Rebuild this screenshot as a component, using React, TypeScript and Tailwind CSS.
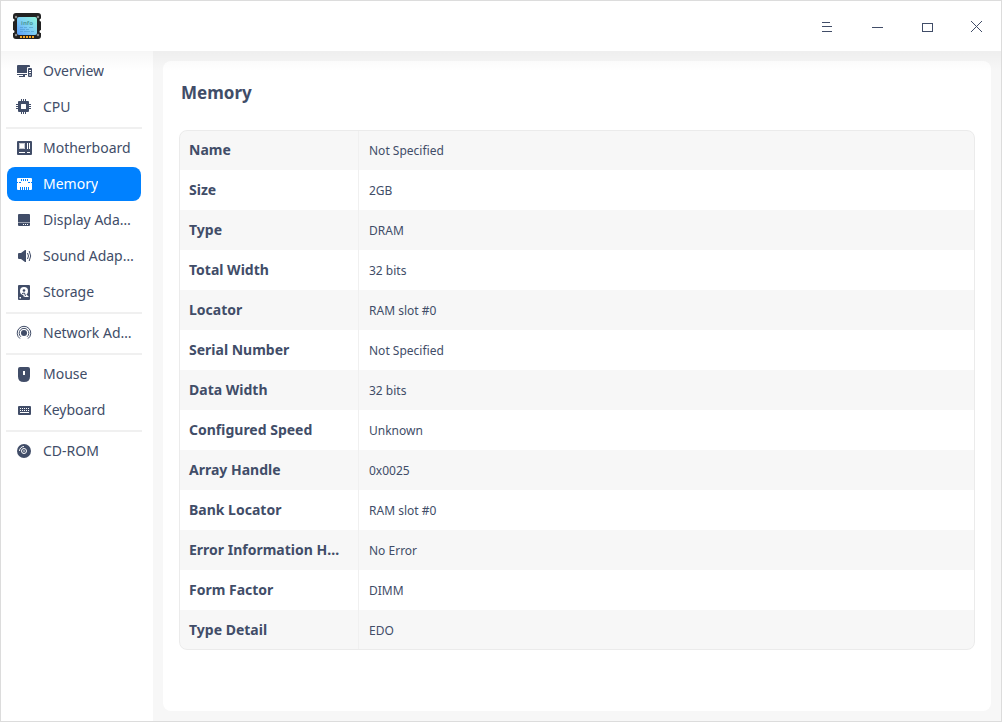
import { Fragment, useState, type ReactNode } from 'react';

type Item = { id: string; label: string; icon: ReactNode };

const Cut = ({ d }: { d: string }) => (
  <path d={d} fill="currentColor" fillRule="evenodd" />
);

const groups: Item[][] = [
  [
    {
      id: 'overview',
      label: 'Overview',
      icon: (
        <>
          <Cut d="M2 2H13a1 1 0 0 1 1 1V4H12a1 1 0 0 0-1 1V10H1V3a1 1 0 0 1 1-1zM1 11H11V12H1zM3 13H9V14H3zM7 12H9V13H7z" />
          <Cut d="M13 5H15a1 1 0 0 1 1 1V13a1 1 0 0 1-1 1H13a1 1 0 0 1-1-1V6a1 1 0 0 1 1-1zM13 7V8H15V7zM13 9V10H15V9zM13 11.500V12.500H15V11.500z" />
        </>
      ),
    },
    {
      id: 'cpu',
      label: 'CPU',
      icon: (
        <Cut d="M3 2H5V0H6V2H7V0H8V2H9V0H10V2H12a1 1 0 0 1 1 1V5H15V6H13V7H15V8H13V9H15V10H13V12a1 1 0 0 1-1 1H10V15H9V13H8V15H7V13H6V15H5V13H3a1 1 0 0 1-1-1V10H0V9H2V8H0V7H2V6H0V5H2V3a1 1 0 0 1 1-1zM5.500 5a.5.5 0 0 0-.5.5V9.500a.5.5 0 0 0 .5.5H9.500a.5.5 0 0 0 .5-.5V5.500a.5.5 0 0 0-.5-.5z" />
      ),
    },
  ],
  [
    {
      id: 'motherboard',
      label: 'Motherboard',
      icon: (
        <>
          <Cut d="M2 1H15a1 1 0 0 1 1 1V14a1 1 0 0 1-1 1H2a1 1 0 0 1-1-1V2a1 1 0 0 1 1-1zM3 3V9H9V3zM11 3V9H12V3zM13 3V9H14V3zM3 12V13H9V12zM11 12V13H14V12z" />
          <path d="M3.500 3.500H8.500V8.500H3.500z" fill="none" stroke="currentColor" strokeOpacity=".3" />
        </>
      ),
    },
    {
      id: 'memory',
      label: 'Memory',
      icon: (
        <Cut d="M2 2H15a1 1 0 0 1 1 1V6H15V7H16V13a1 1 0 0 1-1 1H13V11H12V14H11V11H10V14H9V11H8V14H7V11H6V14H5V11H4V14H2a1 1 0 0 1-1-1V7H2V6H1V3a1 1 0 0 1 1-1zM5 3V5H6V3zM7 3V5H8V3zM9 3V5H10V3zM11 3V5H12V3zM3 6V7H5V6zM12 6V7H14V6z" />
      ),
    },
    {
      id: 'display',
      label: 'Display Adapter',
      icon: (
        <Cut d="M3 2H13a1 1 0 0 1 1 1V10H2V3a1 1 0 0 1 1-1zM2 10.500H14V13a1 1 0 0 1-1 1H3a1 1 0 0 1-1-1zM7 12V13H8V12zM9 12V13H10V12zM11 12V13H12V12z" />
      ),
    },
    {
      id: 'sound',
      label: 'Sound Adapter',
      icon: (
        <>
          <Cut d="M3 5H5L9 2q1-.4 1 .6V13.400q0 1-1 .6L5 11H3a1 1 0 0 1-1-1V6a1 1 0 0 1 1-1z" />
          <path d="M11.500 5q2 3 0 6M13.200 3q3 5 0 10" fill="none" stroke="currentColor" />
        </>
      ),
    },
    {
      id: 'storage',
      label: 'Storage',
      icon: (
        <>
          <rect x="2" y="1" width="12" height="15" rx="1" fill="currentColor" />
          <circle cx="8" cy="7" r="4" fill="#fff" />
          <path d="M7 12L9 9L13 13H9z" fill="#fff" />
          <circle cx="8" cy="6.500" r="1.300" fill="currentColor" />
          <path d="M6 9.500L8.500 9L9.500 12" fill="none" stroke="currentColor" />
          <path d="M3.500 13H5V14.500H3.500z" fill="#fff" />
        </>
      ),
    },
  ],
  [
    {
      id: 'network',
      label: 'Network Adapter',
      icon: (
        <>
          <circle cx="8" cy="8" r="3" fill="currentColor" />
          <path d="M4.900 11.800a4.800 4.800 0 1 1 6.200 0M4 13.600a6.800 6.800 0 1 1 8 0" fill="none" stroke="currentColor" />
        </>
      ),
    },
  ],
  [
    {
      id: 'mouse',
      label: 'Mouse',
      icon: (
        <Cut d="M4 1H12a2 2 0 0 1 2 2V10.500Q14 16 8 16T2 10.500V3a2 2 0 0 1 2-2zM7 5V9H9V5z" />
      ),
    },
    {
      id: 'keyboard',
      label: 'Keyboard',
      icon: (
        <Cut d="M3 4H14a1 1 0 0 1 1 1V12a1 1 0 0 1-1 1H3a1 1 0 0 1-1-1V5a1 1 0 0 1 1-1zM4 6V7H5V6zM6 6V7H7V6zM8 6V7H9V6zM10 6V7H11V6zM12 6V7H13V6zM4 8V9H5V8zM6 8V9H7V8zM8 8V9H9V8zM10 8V9H11V8zM12 8V9H13V8zM4 10V11H13V10z" />
      ),
    },
  ],
  [
    {
      id: 'cdrom',
      label: 'CD-ROM',
      icon: (
        <>
          <circle cx="8" cy="8" r="7" fill="currentColor" />
          <g fill="none" stroke="#fff">
            <circle cx="8" cy="8" r="2.500" />
            <path d="M3.500 8A4.500 4.500 0 0 1 8 3.500" />
          </g>
          <circle cx="8" cy="8" r="0.800" fill="#fff" />
        </>
      ),
    },
  ],
];

const details: [string, string][] = [
  ['Name', 'Not Specified'],
  ['Size', '2GB'],
  ['Type', 'DRAM'],
  ['Total Width', '32 bits'],
  ['Locator', 'RAM slot #0'],
  ['Serial Number', 'Not Specified'],
  ['Data Width', '32 bits'],
  ['Configured Speed', 'Unknown'],
  ['Array Handle', '0x0025'],
  ['Bank Locator', 'RAM slot #0'],
  ['Error Information Handle', 'No Error'],
  ['Form Factor', 'DIMM'],
  ['Type Detail', 'EDO'],
];

const windowButtons = [
  { label: 'Menu', d: 'M3 3H11V4H3zM3 7H13V8H3zM3 12H13V13H3z' },
  { label: 'Minimize', d: 'M3 8H14V9H3z' },
  { label: 'Maximize', d: 'M3 4H14V13H3zM4 5V12H13V5z' },
];

function Logo() {
  return (
    <svg viewBox="0 0 32 32" className="size-8" aria-hidden="true">
      <defs>
        <linearGradient id="chip" x1="1" y1="0" x2="0" y2="1">
          <stop offset="0" stopColor="#8ff5d8" />
          <stop offset="0.500" stopColor="#7fd0f5" />
          <stop offset="1" stopColor="#5a9dfb" />
        </linearGradient>
      </defs>
      <path
        d="M5 3H27a3 3 0 0 1 3 3V8.500a1.500 1.500 0 0 0 0 3V20a1.500 1.500 0 0 0 0 3V26a3 3 0 0 1-3 3H5a3 3 0 0 1-3-3V23a1.500 1.500 0 0 0 0-3V11.500a1.500 1.500 0 0 0 0-3V6a3 3 0 0 1 3-3z"
        fill="#222"
      />
      <g fill="#8b8b8b">
        <circle cx="5" cy="7" r="1.200" />
        <circle cx="27" cy="7" r="1.200" />
        <circle cx="5" cy="25" r="1.200" />
        <circle cx="27" cy="25" r="1.200" />
      </g>
      <rect x="6" y="7" width="20" height="18" rx="2" fill="url(#chip)" />
      <text x="16" y="15" textAnchor="middle" fontSize="6" fontWeight="700" fill="#4c9a9e" fontFamily="Noto Sans, sans-serif">
        info
      </text>
      <path
        d="M9 17.500h3m1 0h3m2 0h4M9 19.500h5m1 0h3M9 21.500h3m1 0h6m1 0h3"
        stroke="#4b94c8"
        strokeOpacity="0.700"
        strokeWidth="0.800"
      />
      <path d="M9 26h2v2H9zM12 26h2v2H12zM15 26h2v2H15zM18 26h2v2H18zM21 26h2v2H21z" fill="#f5a623" />
    </svg>
  );
}

export default function App() {
  const [active, setActive] = useState('memory');

  return (
    <div className="flex min-h-screen flex-col border border-[#dcdcdc] bg-white font-['Noto_Sans',sans-serif] text-[#414d68]">
      <header className="relative flex h-[50px] items-center justify-between bg-white pl-[10px] after:pointer-events-none after:absolute after:inset-x-0 after:top-full after:h-5 after:bg-linear-to-b after:from-black/[0.035] after:to-transparent after:content-['']">
        <Logo />
        <div className="flex h-full">
          {windowButtons.map((b) => (
            <button key={b.label} type="button" aria-label={b.label} className="flex w-[50px] items-center justify-center">
              <svg viewBox="0 0 14 14" className="size-3.5" shapeRendering="crispEdges">
                <Cut d={b.d} />
              </svg>
            </button>
          ))}
          <button type="button" aria-label="Close" className="flex w-[50px] items-center justify-center">
            <svg viewBox="0 0 14 14" className="size-3.5">
              <path d="M2 2L13 13M13 2L2 13" stroke="currentColor" />
            </svg>
          </button>
        </div>
      </header>

      <div className="flex flex-1">
        <nav aria-label="Devices" className="w-[152px] shrink-0 pt-0.5">
          {groups.map((group, i) => (
            <Fragment key={group[0].id}>
              {i > 0 && <hr className="mx-auto mt-0.5 mb-px ml-[5px] h-0.5 w-[136px] border-0 bg-[#f0f0f0]" />}
              <ul className="pr-3 pl-1.5">
                {group.map((item) => (
                  <li key={item.id} className="py-px">
                    <button
                      type="button"
                      onClick={() => setActive(item.id)}
                      aria-current={item.id === active ? 'page' : undefined}
                      className={
                        item.id === active
                          ? 'flex h-[34px] w-full items-center gap-[11px] rounded-lg bg-[#0081ff] pr-1.5 pl-[9px] text-white'
                          : 'flex h-[34px] w-full items-center gap-[11px] rounded-lg pr-1.5 pl-[9px]'
                      }
                    >
                      <svg viewBox="0 0 16 16" className="size-4 shrink-0" aria-hidden="true">
                        {item.icon}
                      </svg>
                      <span className="truncate text-sm">{item.label}</span>
                    </button>
                  </li>
                ))}
              </ul>
            </Fragment>
          ))}
        </nav>

        <main className="flex min-w-0 flex-1 bg-[#f7f7f7] p-[10px]">
          <section className="min-w-0 flex-1 rounded-lg bg-white p-4">
            <h1 className="mb-[21px] pl-0.5 text-[17px] leading-8 font-bold">Memory</h1>
            <div className="relative overflow-hidden rounded-lg after:pointer-events-none after:absolute after:inset-0 after:rounded-lg after:border after:border-[#ebebeb] after:content-['']">
              <table className="w-full table-fixed border-separate border-spacing-0 text-left">
                <tbody>
                  {details.map(([name, value]) => (
                    <tr key={name} className="h-10 odd:bg-[#f7f7f7]">
                      <th scope="row" className="w-[180px] truncate border-r border-[#f0f0f0] pr-4 pl-[10px] text-sm font-bold">
                        {name}
                      </th>
                      <td className="px-[10px] pt-0.5 text-xs">{value}</td>
                    </tr>
                  ))}
                </tbody>
              </table>
            </div>
          </section>
        </main>
      </div>
    </div>
  );
}
